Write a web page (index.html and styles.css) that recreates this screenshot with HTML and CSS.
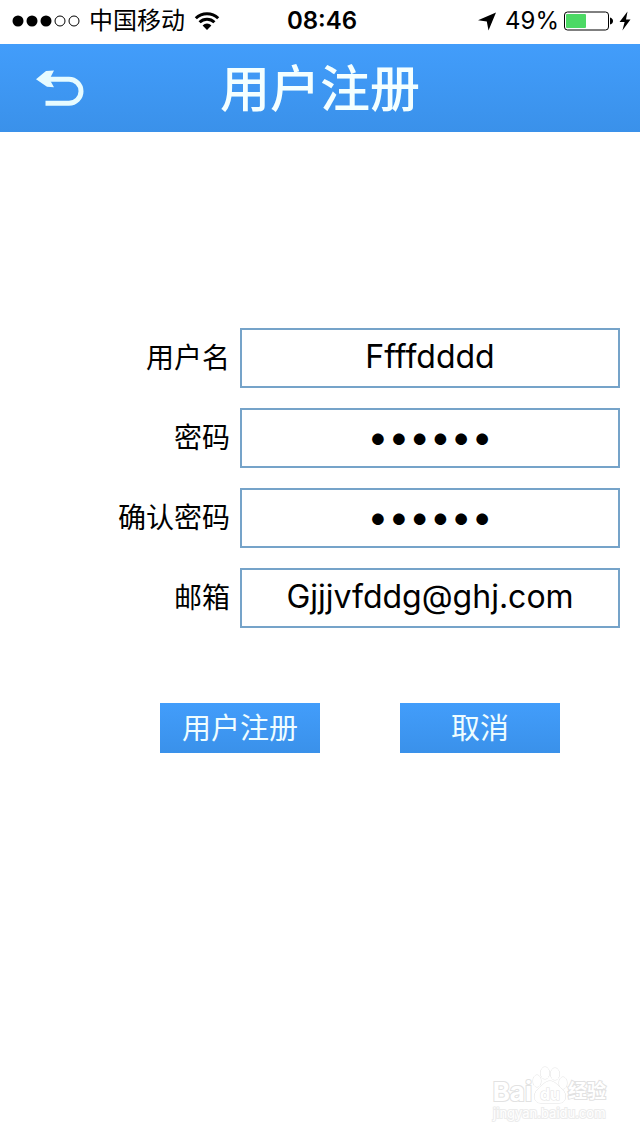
FILE: index.html
```html
<!DOCTYPE html>
<html lang="zh-CN">

<head>
    <meta charset="UTF-8">
    <meta name="viewport" content="width=device-width, initial-scale=1.0">
    <title>用户注册</title>
    <link rel="stylesheet" href="styles.css">
</head>

<body>

    <div class="status-bar">
        <div class="status-left">
            <svg class="signal" width="68" height="12" viewBox="0 0 68 12">
                <circle cx="6" cy="6" r="5.5"/>
                <circle cx="20" cy="6" r="5.5"/>
                <circle cx="34" cy="6" r="5.5"/>
                <circle class="empty" cx="48" cy="6" r="5"/>
                <circle class="empty" cx="62" cy="6" r="5"/>
            </svg>
            <span class="carrier">中国移动</span>
            <svg class="wifi" width="26" height="18" viewBox="0 0 26 18">
                <path class="arc" d="M1.8 6.2 A16 16 0 0 1 24.2 6.2"/>
                <path class="arc" d="M5.6 10.2 A10.5 10.5 0 0 1 20.4 10.2"/>
                <path d="M13 18 L8.6 13.4 A6.3 6.3 0 0 1 17.4 13.4 Z"/>
            </svg>
        </div>
        <span class="time">08:46</span>
        <div class="status-right">
            <svg width="20" height="19" viewBox="0 0 20 19">
                <path d="M19 0.5 L11.5 18.5 L9.8 9.6 L1 8.3 Z"/>
            </svg>
            <span class="percent">49%</span>
            <svg width="50" height="20" viewBox="0 0 50 20">
                <rect class="battery" x="0.5" y="1" width="44" height="18" rx="3"/>
                <rect class="level" x="2" y="3" width="20" height="14" rx="1"/>
                <path d="M46 6.5 Q49 7.5 49 10 Q49 12.5 46 13.5 Z"/>
            </svg>
            <svg width="13" height="20" viewBox="0 0 13 20">
                <path d="M8.5 0.5 L0.5 11 H5.6 L3.4 19.5 L11.5 8.4 H7 Z"/>
            </svg>
        </div>
    </div>

    <header class="nav-bar">
        <button class="back-btn" type="button" aria-label="返回">
            <svg width="48" height="38" viewBox="0 0 48 38">
                <path class="line" d="M8 10.2 H33 A12 12 0 0 1 33 34.2 H9.5"/>
                <path class="tip" d="M0 10.2 L10 2 L18 1.6 L13.5 10.2 L18 18.2 L11 17.8 Z"/>
            </svg>
        </button>
        <h1>用户注册</h1>
    </header>

    <form class="register-form">
        <div class="form-row">
            <label for="username">用户名</label>
            <input type="text" id="username" value="Ffffdddd">
        </div>
        <div class="form-row">
            <label for="password">密码</label>
            <input type="password" id="password" value="123456">
        </div>
        <div class="form-row">
            <label for="confirm">确认密码</label>
            <input type="password" id="confirm" value="123456">
        </div>
        <div class="form-row">
            <label for="email">邮箱</label>
            <input type="email" id="email" value="Gjjjvfddg@ghj.com">
        </div>
        <div class="form-actions">
            <button class="btn" type="submit">用户注册</button>
            <button class="btn" type="button">取消</button>
        </div>
    </form>

    <div class="watermark">
        <div class="watermark-logo">
            <span class="latin">Bai</span>
            <svg width="36" height="38" viewBox="0 0 36 38">
                <ellipse cx="5" cy="15" rx="4" ry="6"/>
                <ellipse cx="13" cy="7" rx="4.5" ry="6"/>
                <ellipse cx="23" cy="8" rx="4.5" ry="6"/>
                <ellipse cx="31" cy="17" rx="4" ry="6"/>
                <path d="M18 15 C23 15 26 20 30 23 C36 29 34 37 27 37 H9 C2 37 0 29 6 23 C10 20 13 15 18 15 Z"/>
                <text x="18" y="34" text-anchor="middle">du</text>
            </svg>
            <span class="chinese">经验</span>
        </div>
        <div class="watermark-url">jingyan.baidu.com</div>
    </div>

</body>

</html>
```
FILE: styles.css
```css
* {
    box-sizing: border-box;
}

body {
    margin: 0;
    min-height: 100vh;
    position: relative;
    background-color: #fff;
    color: #000;
    font-family: Inter, "Noto Sans CJK SC", sans-serif;
}

svg {
    display: block;
}

.status-bar {
    display: grid;
    grid-template-columns: 1fr auto 1fr;
    align-items: center;
    height: 44px;
    padding: 0 8px 2px 12px;
    font-size: 24px;
    line-height: 42px;
}

.status-left,
.status-right {
    display: flex;
    align-items: center;
    gap: 9px;
}

.status-right {
    justify-content: flex-end;
    gap: 5px;
}

.signal .empty {
    fill: none;
    stroke: #000;
}

.wifi .arc {
    fill: none;
    stroke: #000;
    stroke-width: 3;
}

.time {
    font-weight: 600;
}

.percent {
    margin-left: 3px;
}

.battery {
    fill: none;
    stroke: #000;
}

.level {
    fill: #4cd964;
}

.nav-bar {
    display: grid;
    grid-template-columns: 1fr auto 1fr;
    align-items: center;
    height: 88px;
    padding: 0 36px;
    background: linear-gradient(#429dfb, #3a91ea);
}

.nav-bar h1 {
    margin: 0;
    padding-top: 2px;
    color: #f4ffff;
    font-size: 50px;
    font-weight: 500;
    line-height: 86px;
}

.back-btn {
    justify-self: start;
    padding: 0;
    border: none;
    background: none;
    cursor: pointer;
}

.back-btn .line {
    fill: none;
    stroke: #e6fbff;
    stroke-width: 5;
}

.back-btn .tip {
    fill: #e6fbff;
}

.register-form {
    padding: 196px 20px 0;
}

.form-row {
    display: flex;
    align-items: center;
    gap: 10px;
    margin-bottom: 20px;
}

.form-row label {
    flex: 1;
    font-size: 28px;
    font-weight: 400;
    line-height: 60px;
    text-align: right;
}

.form-row input {
    width: 380px;
    height: 60px;
    padding: 0 10px 4px;
    border: 2px solid #75a3c9;
    border-radius: 0;
    background-color: #fff;
    color: #000;
    font-family: Inter, "Noto Sans CJK SC", sans-serif;
    font-size: 32px;
    text-align: center;
    outline: none;
}

.form-row input[type="password"] {
    font-size: 37px;
}

.form-actions {
    display: flex;
    justify-content: flex-end;
    gap: 80px;
    padding: 55px 60px 0 0;
}

.btn {
    width: 160px;
    height: 50px;
    padding: 0 0 3px;
    border: none;
    background: linear-gradient(#429dfb, #3a91ea);
    color: #effdff;
    font-family: "Noto Sans CJK SC", sans-serif;
    font-size: 29px;
    font-weight: 400;
    line-height: 47px;
    cursor: pointer;
}

.watermark {
    position: absolute;
    right: 34px;
    bottom: 14px;
    color: #fff;
    paint-order: stroke fill;
    -webkit-text-stroke: 2px #e2e2e2;
}

.watermark-logo {
    display: flex;
    align-items: flex-end;
    font-weight: 700;
    line-height: 24px;
}

.watermark-logo .latin {
    font-size: 26px;
}

.watermark-logo .chinese {
    font-size: 19px;
}

.watermark-logo svg {
    fill: #fff;
    stroke: #e2e2e2;
}

.watermark-logo text {
    font-size: 16px;
}

.watermark-url {
    font-size: 13px;
    line-height: 18px;
    text-align: center;
    -webkit-text-stroke: 2px #ececec;
}
```
